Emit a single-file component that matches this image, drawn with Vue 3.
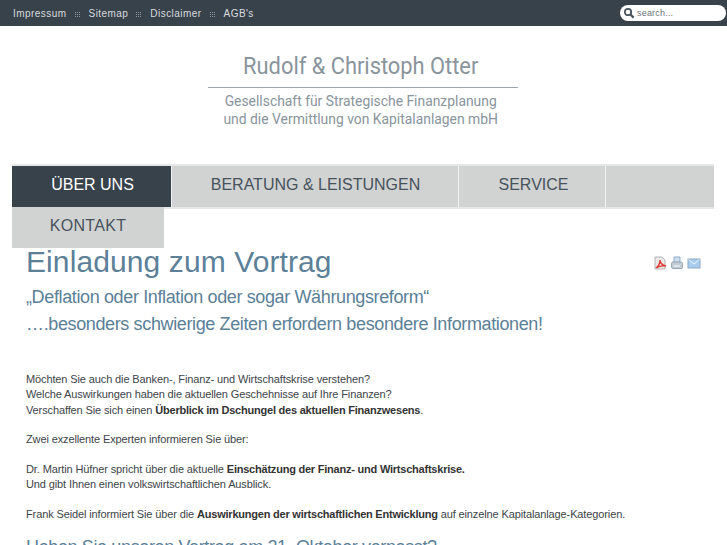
<script setup>
const topLinks = ["Impressum", "Sitemap", "Disclaimer", "AGB's"];
</script>

<template>
  <div class="page">
    <div class="topbar">
      <nav class="toplinks">
        <template v-for="(link, i) in topLinks" :key="link">
          <span v-if="i > 0" class="sep"></span>
          <a>{{ link }}</a>
        </template>
      </nav>
      <div class="search">
        <svg width="12" height="12" viewBox="0 0 12 12">
          <circle cx="5" cy="5" r="3.2" fill="none" stroke="#47525b" stroke-width="1.8" />
          <path d="M7.5 7.5L10.6 10.6" stroke="#47525b" stroke-width="2.2" />
        </svg>
        <span>search...</span>
      </div>
    </div>

    <div class="logo">
      <div class="logo-name"><span>Rudolf &amp; Christoph Otter</span></div>
      <div class="logo-sub">
        <span>Gesellschaft für Strategische Finanzplanung</span>
        <span>und die Vermittlung von Kapitalanlagen mbH</span>
      </div>
    </div>

    <nav class="mainnav">
      <div class="row">
        <a class="item active w1">ÜBER UNS</a>
        <a class="item w2">BERATUNG &amp; LEISTUNGEN</a>
        <a class="item w3">SERVICE</a>
        <a class="item w4"></a>
      </div>
      <a class="item kontakt">KONTAKT</a>
    </nav>

    <main class="content">
      <div class="icons">
        <svg width="14" height="14" viewBox="0 0 14 14">
          <path d="M2 1h7l3 3v9H2z" fill="#e9e9e9" stroke="#b5b5b5" />
          <path d="M3 12c3-2 4-5 4-8 0 3 2 5 6 6-4-.5-7 0-10 2z" fill="none" stroke="#dd3b33" stroke-width="1.4" />
        </svg>
        <svg width="14" height="14" viewBox="0 0 14 14">
          <path d="M4 1h6v5H4z" fill="#cfe0f2" stroke="#8fa9c4" />
          <rect x="1.500" y="6" width="11" height="6.500" rx="1.500" fill="#c3ccd4" stroke="#9aa8b5" />
          <path d="M4 10h6" stroke="#eef0f2" stroke-width="1.400" />
        </svg>
        <svg width="14" height="14" viewBox="0 0 14 14">
          <rect x="1" y="3" width="12" height="9" fill="#a9cdee" stroke="#8ba6bf" />
          <path d="M1.500 3.500L7 8l5.500-4.500" fill="none" stroke="#eef5fb" />
        </svg>
      </div>
      <h1>Einladung zum Vortrag</h1>
      <h2>„Deflation oder Inflation oder sogar Währungsreform“</h2>
      <h2>….besonders schwierige Zeiten erfordern besondere Informationen!</h2>
      <p class="first">
        Möchten Sie auch die Banken-, Finanz- und Wirtschaftskrise verstehen?<br />
        Welche Auswirkungen haben die aktuellen Geschehnisse auf Ihre Finanzen?<br />
        Verschaffen Sie sich einen <b>Überblick im Dschungel des aktuellen Finanzwesens</b>.
      </p>
      <p>Zwei exzellente Experten informieren Sie über:</p>
      <p>
        Dr. Martin Hüfner spricht über die aktuelle <b>Einschätzung der Finanz- und Wirtschaftskrise.</b><br />
        Und gibt Ihnen einen volkswirtschaftlichen Ausblick.
      </p>
      <p>Frank Seidel informiert Sie über die <b>Auswirkungen der wirtschaftlichen Entwicklung</b> auf einzelne Kapitalanlage-Kategorien.</p>
      <h2 class="next">Haben Sie unseren Vortrag am 21. Oktober verpasst?</h2>
    </main>
  </div>
</template>

<style>
html, body {
  margin: 0;
  background: #fff;
  overflow: hidden;
}
</style>

<style scoped>
.page {
  width: 727px;
  height: 545px;
  overflow: hidden;
  font-family: "Liberation Sans", Arial, sans-serif;
}
.topbar {
  height: 26px;
  background: #38424b;
  display: flex;
  justify-content: space-between;
  align-items: center;
}
.toplinks {
  display: flex;
  align-items: center;
  padding-left: 13px;
  font-size: 10px;
  letter-spacing: 0.45px;
  color: #d8dcdf;
}
.sep {
  width: 6px;
  height: 5px;
  margin: 2px 8px 0;
  background:
    linear-gradient(#38424b 1px, transparent 1px) 0 1px / 2px 2px,
    linear-gradient(90deg, #8c949a 1px, transparent 1px) 0 0 / 2px 2px;
}
.search {
  width: 106px;
  height: 16px;
  margin-right: 1px;
  box-sizing: border-box;
  padding-left: 3px;
  background: #fff;
  border-radius: 8px;
  display: flex;
  align-items: center;
  gap: 2px;
  font-size: 9px;
  letter-spacing: 0.2px;
  color: #6c747a;
}
.logo {
  width: 310px;
  margin: 26px 0 0 208px;
  height: 112px;
  color: #89949c;
  text-align: center;
  font-family: "Roboto", sans-serif;
  white-space: nowrap;
}
.logo span {
  display: block;
  padding-right: 5px;
}
.logo-name {
  font-size: 24px;
  line-height: 29px;
  border-bottom: 1px solid #9ea7ae;
  height: 35px;
}
.logo-name span {
  transform: scaleX(0.91);
}
.logo-sub {
  margin-top: 4px;
  font-size: 15px;
  line-height: 18px;
}
.logo-sub span {
  transform: scaleX(0.925);
}
.mainnav {
  margin: 0 13px 0 12px;
}
.row {
  display: flex;
  border-top: 2px solid #e6e7e7;
  border-bottom: 2px solid #e6e7e7;
}
.item {
  display: flex;
  align-items: center;
  justify-content: center;
  height: 41px;
  background: #d1d3d3;
  color: #47525b;
  font-size: 16px;
  box-sizing: border-box;
  border-right: 1px solid #f2f2f2;
  padding-bottom: 4px;
}
.active {
  background: #38424b;
  color: #fff;
}
.w1 { width: 160px; padding-left: 2px; }
.w2 { width: 287px; padding-left: 1px; }
.w3 { width: 147px; padding-left: 3px; }
.w4 { flex: 1; border-right: 0; }
.kontakt {
  width: 152px;
  border-right: 0;
  margin-top: -2px;
  padding-bottom: 3px;
  letter-spacing: 0.3px;
}
.content {
  position: relative;
  padding: 0 26px;
}
.icons {
  position: absolute;
  top: 8px;
  right: 26px;
  display: flex;
  gap: 3px;
}
h1 {
  margin: 0 0 8px;
  font-weight: normal;
  font-size: 30px;
  letter-spacing: 0.1px;
  line-height: 28px;
  color: #5b8098;
}
h2 {
  margin: 0;
  font-weight: normal;
  font-size: 18px;
  line-height: 27px;
  letter-spacing: -0.37px;
  color: #5b8098;
}
p {
  margin: 0 0 14.500px;
  font-size: 11px;
  line-height: 15.300px;
  letter-spacing: -0.12px;
  color: #3d4449;
}
p b {
  letter-spacing: -0.22px;
  color: #333;
}
.first {
  margin-top: 34px;
}
.next {
  margin-top: -3px;
}
</style>
